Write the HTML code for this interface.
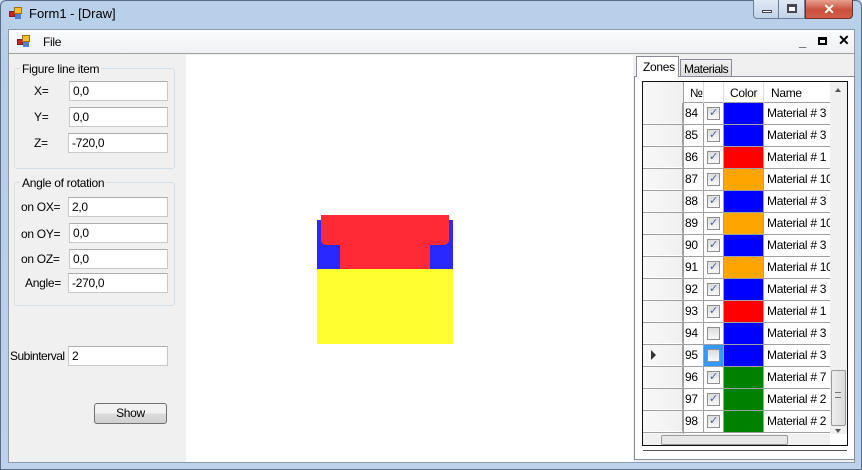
<!DOCTYPE html>
<html><head><style>
*{margin:0;padding:0;box-sizing:border-box}
body{width:862px;height:470px;overflow:hidden;background:#c9dcef;font-family:"Liberation Sans",sans-serif;font-size:12px;letter-spacing:-0.3px;color:#000;position:relative}
.a{position:absolute}
.tb{background:#fff;border:1px solid #c8c8c8;border-top-color:#abadb3;height:20px;padding:2px 3px;font-size:12px}
.gb{border:1px solid #d5dfe5;border-radius:3px}
.lg{background:#f0f0f0;padding:0 2px;font-size:12px}
.row{position:absolute;left:643px;width:187px;height:22px;border-bottom:1px solid #a0a0a0}
.row>div{position:absolute;top:0;height:21px}
.cb{position:absolute;left:5px;top:4px;width:13px;height:13px;border:1px solid #8f8f8f;background:linear-gradient(#dcdcdc,#f8f8f8);color:#4a5d9a;font-size:11px;line-height:11px;text-align:center}
</style></head><body>
<div class="a" style="left:0;top:0;width:862px;height:470px;border:1px solid #5a6d86;border-radius:6px 6px 0 0;background:linear-gradient(#b9d1ea,#b6cde6 60px,#bcd2ea)"></div>
<div class="a" style="left:9px;top:6px;width:14px;height:14px">
<div class="a" style="left:0;top:5px;width:6px;height:6px;background:#d02020;border:1px solid #802020"></div>
<div class="a" style="left:5px;top:1px;width:8px;height:7px;background:#f0c030;border:1px solid #a07010"></div>
<div class="a" style="left:6px;top:8px;width:6px;height:5px;background:#5080d0"></div></div>
<div class="a" style="left:29px;top:6px;font-size:13px;letter-spacing:0">Form1 - [Draw]</div>
<div class="a" style="left:753px;top:0;width:26px;height:19px;border:1px solid #6d7f95;border-top:none;border-radius:0 0 0 4px;background:linear-gradient(#dfe9f5,#c2d3e8)"><div class="a" style="left:8px;top:10px;width:10px;height:3px;background:#fff;border:1px solid #445"></div></div>
<div class="a" style="left:779px;top:0;width:26px;height:19px;border:1px solid #6d7f95;border-top:none;border-left:none;background:linear-gradient(#dfe9f5,#c2d3e8)"><div class="a" style="left:8px;top:4px;width:10px;height:9px;border:2px solid #445;border-top-width:3px;background:#fff"></div></div>
<div class="a" style="left:805px;top:0;width:48px;height:19px;border:1px solid #6d3030;border-top:none;border-radius:0 0 4px 0;background:linear-gradient(#e8a090,#c8503c 55%,#d06048);color:#fff;font-weight:bold;font-size:14px;text-align:center;line-height:18px">✕</div>
<div class="a" style="left:8px;top:29px;width:847px;height:434px;border:1px solid #8a9bb0;background:#f0f0f0"></div>
<div class="a" style="left:9px;top:30px;width:845px;height:24px;background:linear-gradient(#fcfcfd,#eef0f3);border-bottom:1px solid #a0a0a0"></div>
<div class="a" style="left:17px;top:34px;width:14px;height:14px">
<div class="a" style="left:0;top:5px;width:6px;height:6px;background:#d02020;border:1px solid #802020"></div>
<div class="a" style="left:5px;top:1px;width:8px;height:7px;background:#f0c030;border:1px solid #a07010"></div>
<div class="a" style="left:6px;top:8px;width:6px;height:5px;background:#5080d0"></div></div>
<div class="a" style="left:43px;top:35px;font-size:12px">File</div>
<div class="a" style="left:799px;top:34px;font-weight:bold;font-size:13px">_</div>
<div class="a" style="left:818px;top:37px;width:9px;height:8px;border:2px solid #000;border-top-width:3px"></div>
<div class="a" style="left:838px;top:32px;font-weight:bold;font-size:14px">✕</div>
<div class="a gb" style="left:14px;top:68px;width:161px;height:101px"></div>
<div class="a lg" style="left:20px;top:62px">Figure line item</div>
<div class="a" style="left:34px;top:84px">X=</div><div class="a tb" style="left:69px;top:81px;width:99px">0,0</div>
<div class="a" style="left:34px;top:110px">Y=</div><div class="a tb" style="left:69px;top:107px;width:99px">0,0</div>
<div class="a" style="left:34px;top:136px">Z=</div><div class="a tb" style="left:68px;top:133px;width:100px">-720,0</div>
<div class="a gb" style="left:14px;top:182px;width:161px;height:124px"></div>
<div class="a lg" style="left:20px;top:176px">Angle of rotation</div>
<div class="a" style="left:21px;top:200px">on OX=</div><div class="a tb" style="left:68px;top:197px;width:100px">2,0</div>
<div class="a" style="left:21px;top:227px">on OY=</div><div class="a tb" style="left:69px;top:223px;width:99px">0,0</div>
<div class="a" style="left:21px;top:252px">on OZ=</div><div class="a tb" style="left:69px;top:249px;width:99px">0,0</div>
<div class="a" style="left:25px;top:276px">Angle=</div><div class="a tb" style="left:68px;top:273px;width:100px">-270,0</div>
<div class="a" style="left:10px;top:349px;letter-spacing:-0.5px">Subinterval</div><div class="a tb" style="left:68px;top:346px;width:100px">2</div>
<div class="a" style="left:94px;top:403px;width:73px;height:21px;border:1px solid #707070;border-radius:3px;background:linear-gradient(#f2f2f2 50%,#dcdcdc 50%,#d0d0d0);text-align:center;line-height:19px">Show</div>
<div class="a" style="left:186px;top:55px;width:447px;height:407px;background:#fff"></div>
<div class="a" style="left:317px;top:220px;width:136px;height:49px;background:#2828ff"></div>
<div class="a" style="left:321px;top:215px;width:128px;height:30px;background:#ff2a35;border-radius:0 0 5px 5px"></div>
<div class="a" style="left:340px;top:240px;width:90px;height:29px;background:#ff2a35"></div>
<div class="a" style="left:317px;top:269px;width:136px;height:75px;background:#ffff30"></div>
<div class="a" style="left:634px;top:76px;width:221px;height:384px;background:#fff;border:1px solid #898c95"></div>
<div class="a" style="left:636px;top:56px;width:43px;height:21px;background:#fff;border:1px solid #898c95;border-bottom:none;padding:3px 0 0 6px">Zones</div>
<div class="a" style="left:680px;top:59px;width:52px;height:18px;background:linear-gradient(#f2f2f2,#dcdcdc);border:1px solid #898c95;padding:2px 0 0 3px;letter-spacing:-0.5px">Materials</div>
<div class="a" style="left:642px;top:81px;width:206px;height:365px;border:1px solid #101010;background:#fff"></div>
<div class="a" style="left:643px;top:82px;width:187px;height:21px;background:#fff;border-bottom:1px solid #a0a0a0"></div>
<div class="a" style="left:643px;top:82px;width:40px;height:352px;background:linear-gradient(90deg,#f8f8f8,#f0f0f0)"></div>
<div class="a" style="left:683px;top:82px;width:1px;height:352px;background:#a0a0a0"></div>
<div class="a" style="left:690px;top:86px">№</div>
<div class="a" style="left:730px;top:86px">Color</div>
<div class="a" style="left:771px;top:86px">Name</div>
<div class="a" style="left:703px;top:82px;width:1px;height:21px;background:#ddd"></div>
<div class="a" style="left:723px;top:82px;width:1px;height:21px;background:#ddd"></div>
<div class="a" style="left:763px;top:82px;width:1px;height:21px;background:#ddd"></div>
<div id="rows"></div>
<script>
var d=[[84,'#0000ff',3,1],[85,'#0000ff',3,1],[86,'#ff0000',1,1],[87,'#ffa500',10,1],[88,'#0000ff',3,1],[89,'#ffa500',10,1],[90,'#0000ff',3,1],[91,'#ffa500',10,1],[92,'#0000ff',3,1],[93,'#ff0000',1,1],[94,'#0000ff',3,0],[95,'#0000ff',3,0],[96,'#008000',7,1],[97,'#008000',2,1],[98,'#008000',2,1]];
var h='';
d.forEach(function(r,i){var y=103+i*22;var sel=r[0]==95;
h+='<div class="row" style="top:'+y+'px">'+
'<div style="left:0;width:40px;border-right:1px solid #a0a0a0;border-bottom:1px solid #fff">'+(sel?'<span style="position:absolute;left:8px;top:5px;width:0;height:0;border-left:5px solid #333;border-top:5px solid transparent;border-bottom:5px solid transparent"></span>':'')+'</div>'+
'<div style="left:40px;width:21px;border-right:1px solid #a0a0a0;padding:3px 0 0 2px">'+r[0]+'</div>'+
'<div style="left:61px;width:20px;border-right:1px solid #a0a0a0;background:'+(sel?'#3399ff':'#fff')+'"><div class="cb" style="left:3px">'+(r[3]?'✓':'')+'</div></div>'+
'<div style="left:81px;width:40px;border-right:1px solid #a0a0a0;background:'+r[1]+'"></div>'+
'<div style="left:121px;width:66px;padding:3px 0 0 3px;white-space:nowrap;overflow:hidden">Material # '+r[2]+'</div></div>';});
document.getElementById('rows').innerHTML=h;
</script>
<div class="a" style="left:830px;top:82px;width:17px;height:352px;background:#f0f0f0"></div>
<div class="a" style="left:835px;top:88px;width:0;height:0;border-left:3px solid transparent;border-right:3px solid transparent;border-bottom:4px solid #555"></div>
<div class="a" style="left:831px;top:370px;width:15px;height:56px;border:1px solid #999;border-radius:2px;background:linear-gradient(90deg,#eee,#dadada)"></div>
<div class="a" style="left:835px;top:392px;width:6px;height:6px;border-top:1px solid #777;border-bottom:1px solid #777"></div>
<div class="a" style="left:835px;top:429px;width:0;height:0;border-left:3px solid transparent;border-right:3px solid transparent;border-top:4px solid #555"></div>
<div class="a" style="left:643px;top:434px;width:187px;height:11px;background:#f0f0f0"></div>
<div class="a" style="left:661px;top:435px;width:127px;height:10px;border:1px solid #999;border-radius:2px;background:#e8e8e8"></div>
<div class="a" style="left:643px;top:445px;width:205px;height:1px;background:#101010"></div>
<div class="a" style="left:643px;top:446px;width:204px;height:5px;background:#fff;border-bottom:1px solid #555"></div>
</body></html>
